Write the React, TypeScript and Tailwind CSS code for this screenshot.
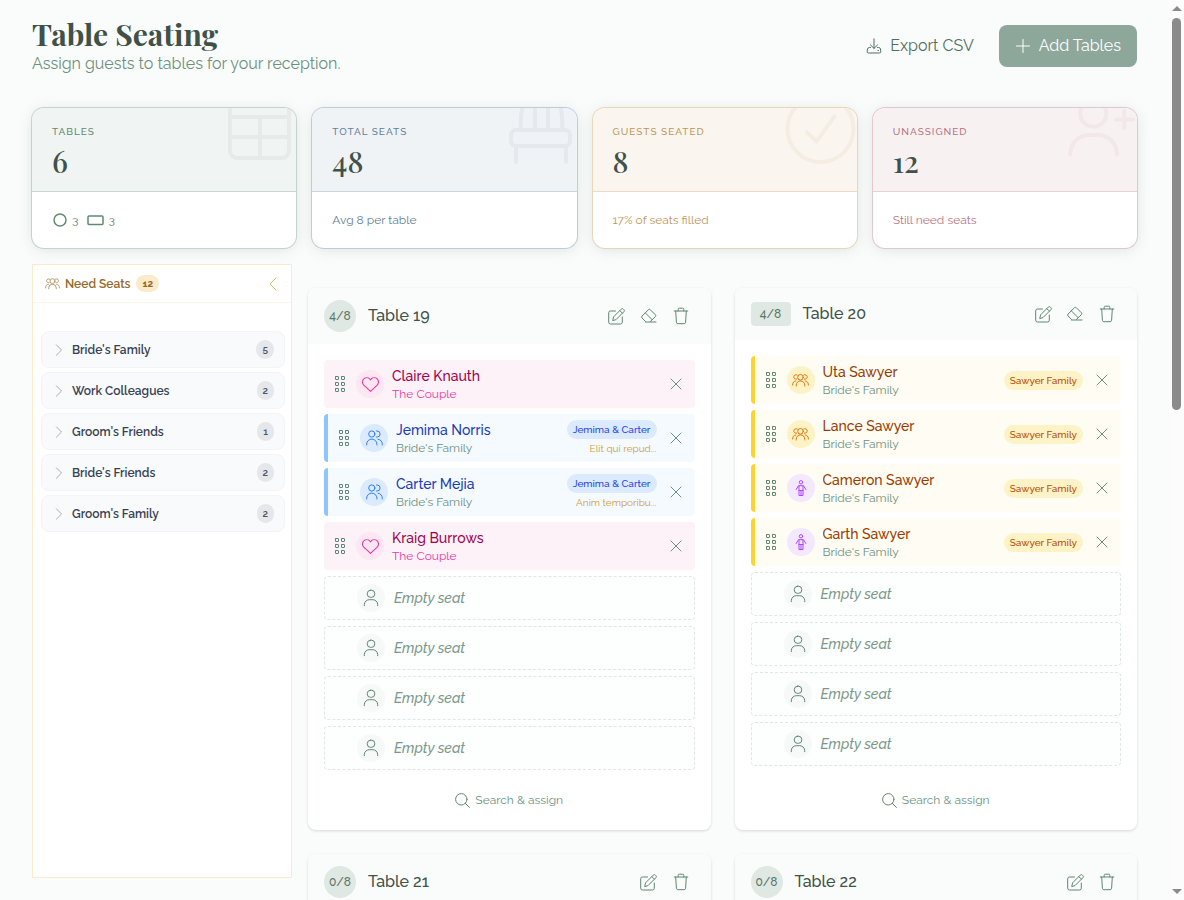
import type { ReactNode } from "react";
import clsx from "clsx";

type IconProps = { className?: string };

function Svg({ box, className, children }: { box: string; className?: string; children: ReactNode }) {
  return (
    <svg
      viewBox={box}
      className={clsx("shrink-0", className)}
      fill="none"
      stroke="currentColor"
      strokeWidth="1"
      strokeLinecap="round"
      strokeLinejoin="round"
      aria-hidden="true"
    >
      {children}
    </svg>
  );
}

const DownloadIcon = ({ className }: IconProps) => (
  <Svg box="0 0 16 16" className={className}>
    <path d="M8 .8v9.400M4.500 7L8 10.400 11.500 7M4.500 9.500h-1a2 2 0 0 0-2 1.500l-.3 2.200A1.500 1.500 0 0 0 2.700 15h10.600a1.500 1.500 0 0 0 1.500-1.800l-.3-2.200a2 2 0 0 0-2-1.500h-1M12 12.500h.5" />
  </Svg>
);

const PlusIcon = ({ className }: IconProps) => (
  <Svg box="0 0 16 16" className={className}>
    <path d="M8 1.500v13M1.500 8h13" />
  </Svg>
);

const EditIcon = ({ className }: IconProps) => (
  <Svg box="0 0 17 17" className={className}>
    <path d="M7.500 3H2.500A1.800 1.800 0 0 0 .7 4.800v9.400A1.800 1.800 0 0 0 2.500 16h10a1.800 1.800 0 0 0 1.800-1.800V9" />
    <path d="M4.800 12.200l.8-3.400 7.700-7.700a1.400 1.400 0 0 1 2 0l.6.6a1.400 1.400 0 0 1 0 2l-7.700 7.700zM11.800 2.600l2.600 2.600" />
  </Svg>
);

const EraserIcon = ({ className }: IconProps) => (
  <Svg box="0 0 16 16" className={className}>
    <path d="M4.500 13.500L1 9.900a1.300 1.300 0 0 1 0-1.800L7.500 1.700a1.300 1.300 0 0 1 1.800 0l5.100 5.100a1.300 1.300 0 0 1 0 1.800l-5 4.900M4.500 5l6.600 6.700M4.500 14h10.500" />
  </Svg>
);

const TrashIcon = ({ className }: IconProps) => (
  <Svg box="0 0 16 18" className={className}>
    <path d="M1.200 4h13.600M5.200 4V2.300A1.100 1.100 0 0 1 6.300 1.200h3.400a1.100 1.100 0 0 1 1.100 1.100V4M2.700 4l.7 11.300a1.500 1.500 0 0 0 1.500 1.400h6.200a1.500 1.500 0 0 0 1.500-1.400L13.300 4" />
  </Svg>
);

const GripIcon = ({ className }: IconProps) => (
  <Svg box="0 0 10 16" className={className}>
    {[0.5, 6.5].map((x) =>
      [0.5, 6.5, 12.5].map((y) => <rect key={`${x}-${y}`} x={x} y={y} width="3" height="3" rx=".4" />)
    )}
  </Svg>
);

const HeartIcon = ({ className }: IconProps) => (
  <Svg box="0 0 16 16" className={className}>
    <path d="M8 14.500L1.700 8.600a4 4 0 0 1 0-5.800 4 4 0 0 1 5.600 0L8 3.600l.7-.8a4 4 0 0 1 5.600 0 4 4 0 0 1 0 5.800z" />
  </Svg>
);

const CoupleIcon = ({ className }: IconProps) => (
  <Svg box="0 0 17 16" className={className}>
    <circle cx="5.800" cy="4" r="3.100" />
    <path d="M.7 15v-.8a5.100 5.100 0 0 1 10.200 0v.8M10.500 1h.6a3 3 0 0 1 0 6h-.6M12 9.200c2.600.3 4.300 2.400 4.300 5v.8" />
  </Svg>
);

const FamilyIcon = ({ className }: IconProps) => (
  <Svg box="0 0 17 14" className={className}>
    <circle cx="8.500" cy="4.300" r="2.800" />
    <path d="M4.200 13v-.8a4.300 4.300 0 0 1 8.600 0v.8M5.300 2a2.300 2.300 0 1 0-.7 4.200M11.700 2a2.300 2.300 0 1 1 .7 4.200M.6 12c0-2.500 1.200-3.900 3.200-4M16.400 12c0-2.500-1.200-3.900-3.200-4" />
  </Svg>
);

const ChildIcon = ({ className }: IconProps) => (
  <Svg box="0 0 12 16" className={className}>
    <circle cx="6" cy="2.300" r="1.700" />
    <path d="M1.200 9.500l2.300-3.800h5L10.800 9.500M4 6v9.500h4V6M6 11v4.500M4 10.500h4" />
  </Svg>
);

const UserIcon = ({ className }: IconProps) => (
  <Svg box="0 0 16 18" className={className}>
    <rect x="4.200" y="1.200" width="7.600" height="7.200" rx="3.500" />
    <path d="M1.300 16.700v-1.200a5 5 0 0 1 5-4.800h3.400a5 5 0 0 1 5 4.800v1.200" />
  </Svg>
);

const CloseIcon = ({ className }: IconProps) => (
  <Svg box="0 0 12 12" className={className}>
    <path d="M1 1l10 10M11 1L1 11" />
  </Svg>
);

const SearchIcon = ({ className }: IconProps) => (
  <Svg box="0 0 15 15" className={className}>
    <circle cx="6.300" cy="6.300" r="5.700" />
    <path d="M10.400 10.400l4 4" />
  </Svg>
);

const ChevronIcon = ({ className }: IconProps) => (
  <Svg box="0 0 8 14" className={className}>
    <path d="M1 1L7 7 1 13" />
  </Svg>
);

const stats = [
  {
    label: "Tables",
    value: "6",
    note: null,
    ring: "ring-[#c3d4cb]",
    head: "bg-[#f0f4f3] border-[#c9d6d1]",
    text: "text-[#5f8a72]",
    mark: "text-[#e6ebe9]",
    art: <path d="M6-12h59v55a7 7 0 0 1-7 7H13a7 7 0 0 1-7-7zM6 9h59M6 29h59M36 9v40" />,
  },
  {
    label: "Total Seats",
    value: "48",
    note: "Avg 8 per table",
    ring: "ring-[#c0cdd6]",
    head: "bg-[#eff3f6] border-[#c9d4dd]",
    text: "text-[#64809a]",
    mark: "text-[#e4e9ed]",
    art: (
      <path d="M11 22h49a5 5 0 0 1 5 5v6a5 5 0 0 1-5 5H11a5 5 0 0 1-5-5v-6a5 5 0 0 1 5-5zM11 38v16M61 38v16M16 22Q15 8 18-4M30 22V-4M43 22V-4M57 22Q58 8 55-4" />
    ),
  },
  {
    label: "Guests Seated",
    value: "8",
    note: "17% of seats filled",
    ring: "ring-[#e6d6ba]",
    head: "bg-[#faf6ef] border-[#eadcc2]",
    text: "text-[#c0965a]",
    mark: "text-[#f5ece2]",
    art: (
      <>
        <circle cx="35.500" cy="21" r="33" />
        <path d="M22 24.300l9.500 9.400L49.500 8.300" />
      </>
    ),
  },
  {
    label: "Unassigned",
    value: "12",
    note: "Still need seats",
    ring: "ring-[#e0c8cd]",
    head: "bg-[#f8f1f2] border-[#e6d2d6]",
    text: "text-[#b87480]",
    mark: "text-[#f2e7e9]",
    art: (
      <path d="M15.300 5.700a13 13 0 1 0 26 0a13 13 0 1 0-26 0M5.300 46.500v-1a19 19 0 0 1 19-18.500H33a19 19 0 0 1 19 18.500v1M59.300 3v17M51 11.500h17" />
    ),
  },
];

const groups = [
  { name: "Bride's Family", count: 5 },
  { name: "Work Colleagues", count: 2 },
  { name: "Groom's Friends", count: 1 },
  { name: "Bride's Friends", count: 2 },
  { name: "Groom's Family", count: 2 },
];

type Kind = "heart" | "couple" | "family" | "child";
type Guest = { name: string; group: string; kind: Kind; party?: string; note?: string };
type SeatingTable = { name: string; shape: "round" | "rect"; guests: Guest[]; seats: number };

const tables: SeatingTable[] = [
  {
    name: "Table 19",
    shape: "round",
    seats: 8,
    guests: [
      { name: "Claire Knauth", group: "The Couple", kind: "heart" },
      { name: "Jemima Norris", group: "Bride's Family", kind: "couple", party: "Jemima & Carter", note: "Elit qui repud..." },
      { name: "Carter Mejia", group: "Bride's Family", kind: "couple", party: "Jemima & Carter", note: "Anim temporibu..." },
      { name: "Kraig Burrows", group: "The Couple", kind: "heart" },
    ],
  },
  {
    name: "Table 20",
    shape: "rect",
    seats: 8,
    guests: [
      { name: "Uta Sawyer", group: "Bride's Family", kind: "family", party: "Sawyer Family" },
      { name: "Lance Sawyer", group: "Bride's Family", kind: "family", party: "Sawyer Family" },
      { name: "Cameron Sawyer", group: "Bride's Family", kind: "child", party: "Sawyer Family" },
      { name: "Garth Sawyer", group: "Bride's Family", kind: "child", party: "Sawyer Family" },
    ],
  },
  { name: "Table 21", shape: "round", seats: 8, guests: [] },
  { name: "Table 22", shape: "round", seats: 8, guests: [] },
];

const rowStyles: Record<Kind, { row: string; name: string; group: string; avatar: string; pill: string }> = {
  heart: {
    row: "bg-[#fdf2f8]",
    name: "text-[#a3004c]",
    group: "text-[#f0359c]",
    avatar: "bg-[#fce7f3] text-[#f0359c]",
    pill: "",
  },
  couple: {
    row: "border-l-4 border-[#8ec5ff] bg-[#f5faff]",
    name: "text-[#193cb8]",
    group: "text-[#6b9080]",
    avatar: "bg-[#dbeafe] text-[#2b7fff]",
    pill: "bg-[#dbeafe] text-[#1f48e6]",
  },
  family: {
    row: "border-l-4 border-[#ffd230] bg-[#fffcf3]",
    name: "text-[#973c00]",
    group: "text-[#6b9080]",
    avatar: "bg-[#fef3c6] text-[#e17100]",
    pill: "bg-[#fef3c6] text-[#bb4d00]",
  },
  child: {
    row: "border-l-4 border-[#ffd230] bg-[#fffcf3]",
    name: "text-[#973c00]",
    group: "text-[#6b9080]",
    avatar: "bg-[#f3e8ff] text-[#ad46ff]",
    pill: "bg-[#fef3c6] text-[#bb4d00]",
  },
};

function KindIcon({ kind }: { kind: Kind }) {
  if (kind === "heart") return <HeartIcon className="size-[17px]" />;
  if (kind === "couple") return <CoupleIcon className="w-[17px] h-4" />;
  if (kind === "family") return <FamilyIcon className="w-[17px] h-[14px]" />;
  return <ChildIcon className="w-3 h-4" />;
}

function GuestRow({ guest }: { guest: Guest }) {
  const s = rowStyles[guest.kind];
  return (
    <li className={clsx("flex h-12 items-center rounded pr-3", s.row)}>
      <GripIcon className="ml-[11px] w-[10px] h-4 text-[#5f8672]" />
      <span className={clsx("ml-[11px] flex size-7 shrink-0 items-center justify-center rounded-full", s.avatar)}>
        <KindIcon kind={guest.kind} />
      </span>
      <div className="ml-2 min-w-0 flex-1">
        <p className={clsx("truncate text-sm leading-5 font-medium", s.name)}>{guest.name}</p>
        <p className={clsx("truncate text-xs leading-4", s.group)}>{guest.group}</p>
      </div>
      {guest.party && (
        <div className="flex flex-col items-end">
          <span className={clsx("rounded-full px-[6px] text-[10px] leading-[19px] font-medium", s.pill)}>
            {guest.party}
          </span>
          {guest.note && <span className="pt-[2px] text-[10px] leading-4 text-[#cf9a3f]">{guest.note}</span>}
        </div>
      )}
      <button type="button" aria-label={`Remove ${guest.name}`} className="ml-3 flex w-[14px] justify-center text-[#6b9080]">
        <CloseIcon className="size-3" />
      </button>
    </li>
  );
}

function TableCard({ table }: { table: SeatingTable }) {
  const taken = table.guests.length;
  // Tables with nobody seated stay folded to their header
  const open = taken > 0;

  return (
    <section className="flex flex-col rounded-lg bg-white shadow-[0_1px_3px_rgba(0,0,0,0.14)]">
      <header className="flex items-center rounded-t-lg bg-[#fafcfb] px-4 py-3">
        <span
          className={clsx(
            "flex shrink-0 items-center justify-center bg-[#dfe8e3] text-xs font-medium text-[#5b7567]",
            table.shape === "round" ? "size-8 rounded-full" : "h-6 w-10 rounded"
          )}
        >
          {taken}/{table.seats}
        </span>
        <h2 className="ml-3 flex-1 text-base leading-7 font-medium text-[#3f5148]">{table.name}</h2>
        <div className="flex gap-1 text-[#5f8672]">
          <button type="button" aria-label={`Edit ${table.name}`} className="flex size-7 items-center justify-center">
            <EditIcon className="size-[17px]" />
          </button>
          {open && (
            <button type="button" aria-label={`Clear ${table.name}`} className="flex size-7 items-center justify-center">
              <EraserIcon className="size-4" />
            </button>
          )}
          <button type="button" aria-label={`Delete ${table.name}`} className="flex size-7 items-center justify-center">
            <TrashIcon className="w-4 h-[18px]" />
          </button>
        </div>
      </header>
      {open && (
        <>
          <ul className="flex flex-1 flex-col gap-[6px] p-4">
            {table.guests.map((g) => (
              <GuestRow key={g.name} guest={g} />
            ))}
            {Array.from({ length: table.seats - taken }, (_, i) => (
              <li
                key={i}
                className="flex h-11 items-center rounded border border-dashed border-[#dfe8e3] bg-[#fdfefe] pl-8"
              >
                <span className="flex size-7 items-center justify-center rounded-full bg-[#f7f9f8] text-[#5f8672]">
                  <UserIcon className="w-4 h-[18px]" />
                </span>
                <span className="ml-[9px] text-sm leading-5 font-medium italic text-[#7a9889]">Empty seat</span>
              </li>
            ))}
          </ul>
          <div className="flex justify-center pb-4">
            <button type="button" className="flex h-7 items-center gap-[5px] text-xs text-[#6b9080]">
              <SearchIcon className="size-[15px] text-[#5f8672]" />
              Search &amp; assign
            </button>
          </div>
        </>
      )}
    </section>
  );
}

export default function App() {
  return (
    <div className="flex min-h-screen items-start bg-[#fafcfb] font-['Raleway','Lato',sans-serif]">
      <main className="min-w-0 flex-1 px-8 py-4">
        <header className="flex items-center justify-between">
          <div>
            <h1 className="font-['Playfair_Display','Liberation_Serif',serif] text-3xl leading-9 font-bold text-[#3f5148]">
              Table Seating
            </h1>
            <p className="text-base leading-6 text-[#6b9080]">Assign guests to tables for your reception.</p>
          </div>
          <div className="flex items-center gap-[25px]">
            <button type="button" className="flex items-center gap-2 text-base text-[#4f6f60]">
              <DownloadIcon className="size-4" />
              Export CSV
            </button>
            <button
              type="button"
              className="flex h-[42px] items-center gap-2 rounded-lg bg-[#8da79a] px-4 text-base text-white"
            >
              <PlusIcon className="size-4" />
              Add Tables
            </button>
          </div>
        </header>

        <div className="mt-8 grid grid-cols-4 gap-4">
          {stats.map((s) => (
            <section
              key={s.label}
              className={clsx("overflow-hidden rounded-xl bg-white ring-1 shadow-[0_2px_14px_rgba(90,120,105,0.18)]", s.ring)}
            >
              <div className={clsx("relative h-[84px] border-b px-5 pt-4", s.head)}>
                <svg
                  viewBox="0 0 72 60"
                  className={clsx("absolute top-0 right-0 h-[60px] w-[72px]", s.mark)}
                  fill="none"
                  stroke="currentColor"
                  strokeWidth="4"
                  strokeLinecap="round"
                  strokeLinejoin="round"
                  aria-hidden="true"
                >
                  {s.art}
                </svg>
                <h2 className={clsx("text-[10px] leading-4 font-medium tracking-widest uppercase", s.text)}>{s.label}</h2>
                <p className="mt-[3px] font-['Playfair_Display','Liberation_Serif',serif] text-3xl leading-9 font-medium text-[#3f5148]">
                  {s.value}
                </p>
              </div>
              <div className={clsx("flex h-14 items-center px-5 text-xs", s.text)}>
                {s.note ?? (
                  <>
                    <Svg box="0 0 16 16" className="size-4">
                      <circle cx="8" cy="8" r="6" strokeWidth="1.500" />
                    </Svg>
                    <span className="ml-1">3</span>
                    <Svg box="0 0 17 16" className="ml-[9px] h-4 w-[17px]">
                      <rect x="1" y="4" width="15" height="8.500" rx="1" strokeWidth="1.500" />
                    </Svg>
                    <span className="ml-1">3</span>
                  </>
                )}
              </div>
            </section>
          ))}
        </div>

        <div className="mt-4 flex items-start gap-4">
          <aside className="h-[614px] w-[260px] shrink-0 border border-[#fbebcb] bg-white">
            <header className="flex h-[38px] items-center border-b border-[#fdf6e6] pl-3 pr-[14px] text-[#96692a]">
              <FamilyIcon className="w-[15px] h-[13px] text-[#b08d5c]" />
              <h2 className="ml-[5px] text-xs font-semibold">Need Seats</h2>
              <span className="ml-[6px] rounded-full bg-[#fbebcb] px-[6px] text-[10px] leading-[17px] font-bold">12</span>
              <button type="button" aria-label="Collapse panel" className="ml-auto text-[#e9b45a]">
                <ChevronIcon className="h-[14px] w-2 rotate-180" />
              </button>
            </header>
            <ul className="flex flex-col gap-1 pt-7 pr-[6px] pl-2">
              {groups.map((g) => (
                <li key={g.name}>
                  <button
                    type="button"
                    className="flex h-[37px] w-full items-center rounded-lg border border-[#f3f4f6] bg-[#f9fafb] pr-[10px] pl-[13px]"
                  >
                    <ChevronIcon className="h-3 w-2 text-[#99a1af]" />
                    <span className="ml-[9px] text-xs font-semibold text-[#364153]">{g.name}</span>
                    <span className="ml-auto flex h-[19px] min-w-[17px] items-center justify-center rounded-full bg-[#e5e7eb] px-[6px] text-[10px] font-semibold text-[#4a5565]">
                      {g.count}
                    </span>
                  </button>
                </li>
              ))}
            </ul>
          </aside>

          <div className="grid min-w-0 flex-1 grid-cols-2 gap-6 pt-6">
            {tables.map((t) => (
              <TableCard key={t.name} table={t} />
            ))}
          </div>
        </div>
      </main>

      {/* Scroll track */}
      <div
        className="sticky top-0 flex h-screen w-[15px] shrink-0 flex-col items-center bg-[#fcfcfc] py-[6px]"
        aria-hidden="true"
      >
        <div className="border-x-[5px] border-b-[5px] border-x-transparent border-b-[#8b8b8b]" />
        <div className="mt-[7px] min-h-0 w-[9px] flex-1">
          <div className="h-[45%] rounded-full bg-[#8b8b8b]" />
        </div>
        <div className="border-x-[5px] border-t-[5px] border-x-transparent border-t-[#8b8b8b]" />
      </div>
    </div>
  );
}
